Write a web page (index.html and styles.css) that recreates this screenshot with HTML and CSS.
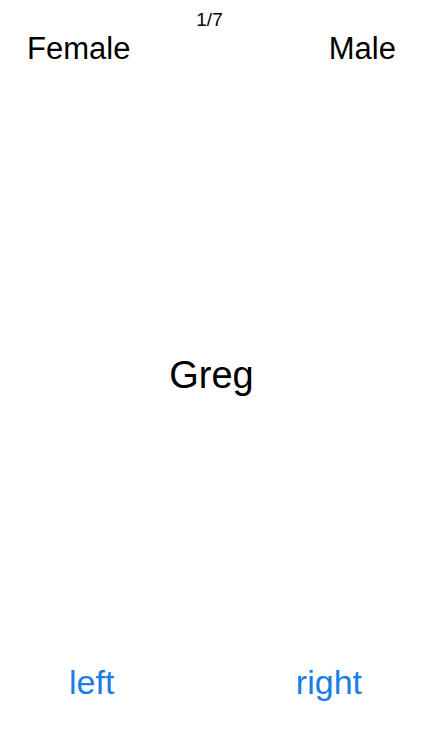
FILE: index.html
```html
<!DOCTYPE html>
<html>
<head>
<meta charset="utf-8">
<link rel="stylesheet" href="styles.css">
</head>
<body>
<div class="screen">
  <div class="counter">1/7</div>
  <div class="labels">
    <span class="label">Female</span>
    <span class="label">Male</span>
  </div>
  <div class="name">Greg</div>
  <div class="actions">
    <span class="action">left</span>
    <span class="action">right</span>
  </div>
</div>
</body>
</html>
```
FILE: styles.css
```css
html, body {
  margin: 0;
  padding: 0;
  background: #ffffff;
}
body {
  font-family: "Liberation Sans", Arial, sans-serif;
  color: #000000;
}
.screen {
  width: 423px;
  height: 750px;
  display: flex;
  flex-direction: column;
}
.counter {
  font-size: 19px;
  line-height: 20px;
  text-align: center;
  padding-top: 10px;
  padding-right: 4px;
}
.labels {
  display: flex;
  justify-content: space-between;
  padding: 1px 27px 0 27px;
  font-size: 31px;
  line-height: 36px;
}
.name {
  flex: 1;
  display: flex;
  align-items: center;
  justify-content: center;
  padding-top: 22px;
  font-size: 38px;
}
.actions {
  display: flex;
  justify-content: space-between;
  padding: 0 61px 48px 69px;
  font-size: 34px;
  line-height: 40px;
  color: #1a7ee6;
}
```
